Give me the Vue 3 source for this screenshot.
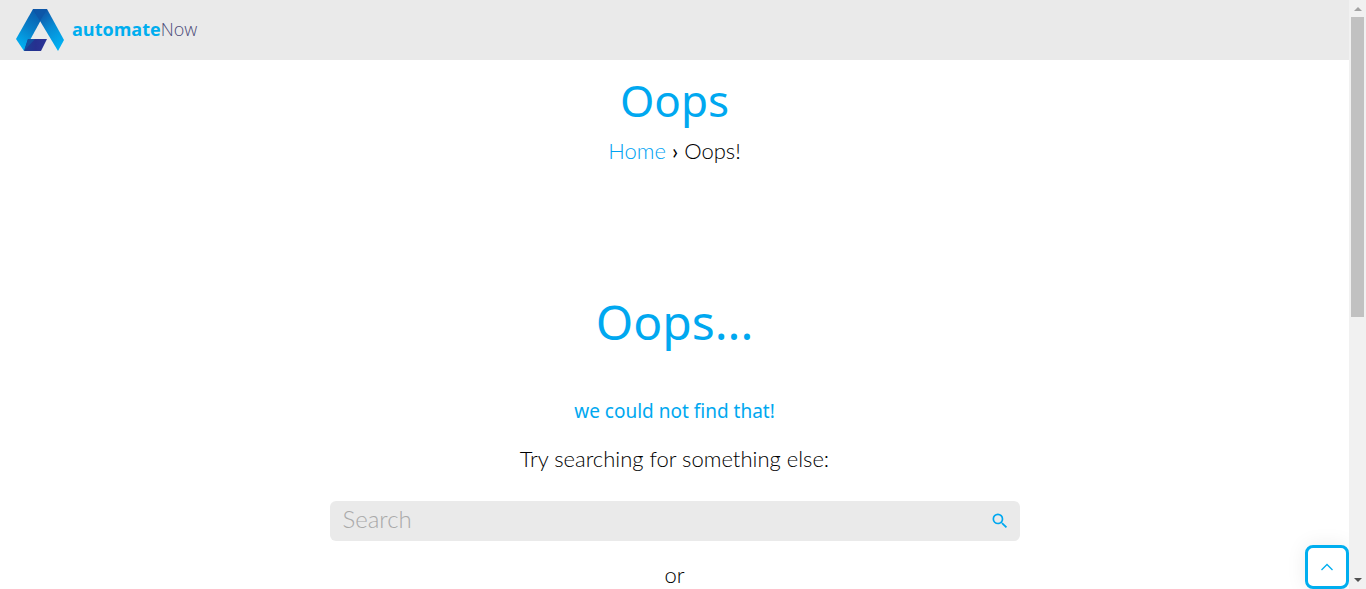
<script setup>
import { ref } from 'vue'

const query = ref('')
</script>

<template>
  <div class="window">
    <div class="page">
      <header class="site-header">
        <a class="brand" href="#" aria-label="automateNow">
          <svg class="brand-mark" viewBox="0 0 48 42" aria-hidden="true">
            <defs>
              <linearGradient id="left-limb" x1="0.75" y1="0" x2="0.25" y2="1">
                <stop offset="0" stop-color="#0a55a6" />
                <stop offset="0.5" stop-color="#087fc9" />
                <stop offset="1" stop-color="#00b4f5" />
              </linearGradient>
              <linearGradient id="right-limb" x1="0.2" y1="0" x2="0.8" y2="1">
                <stop offset="0" stop-color="#134a9c" />
                <stop offset="0.5" stop-color="#078bd4" />
                <stop offset="1" stop-color="#00b4f5" />
              </linearGradient>
              <linearGradient id="foot" x1="0" y1="0" x2="1" y2="0">
                <stop offset="0" stop-color="#1a3f94" />
                <stop offset="0.5" stop-color="#26308f" />
                <stop offset="1" stop-color="#2b3597" />
              </linearGradient>
            </defs>
            <path d="M17 0H31L8 42L0 30Z" fill="url(#left-limb)" />
            <path d="M17 0H31L48 31L42 42L24 12Z" fill="url(#right-limb)" />
            <path d="M17 0H31L24 12Z" fill="#0d57a8" />
            <path d="M12 30H31L25 42H8Z" fill="url(#foot)" />
            <path d="M12 30H19L8 42Z" fill="#14509f" />
          </svg>
          <span class="brand-name"><b>automate</b>Now</span>
        </a>
      </header>

      <main>
        <section class="title">
          <h1>Oops</h1>
          <nav class="crumbs" aria-label="Breadcrumb">
            <a href="#">Home</a> <b>›</b> <span>Oops!</span>
          </nav>
        </section>

        <section class="missing">
          <h2>Oops...</h2>
          <h3>we could not find that!</h3>
          <p>Try searching for something else:</p>
          <form class="search" role="search" @submit.prevent>
            <input v-model="query" type="text" placeholder="Search" aria-label="Search" />
            <button type="submit" aria-label="Submit search">
              <svg viewBox="0 0 24 24" aria-hidden="true">
                <path d="M15.5 14h-.79l-.28-.27A6.47 6.47 0 0 0 16 9.5 6.5 6.5 0 1 0 9.5 16c1.61 0 3.09-.59 4.23-1.57l.27.28v.79l5 4.99L20.49 19l-4.99-5zm-6 0C7.01 14 5 11.99 5 9.5S7.01 5 9.5 5 14 7.01 14 9.5 11.99 14 9.5 14z" />
              </svg>
            </button>
          </form>
          <p>or</p>
        </section>
      </main>

      <button class="to-top" type="button" aria-label="Back to top">
        <svg viewBox="0 0 14 8" aria-hidden="true"><path d="M1.5 7L7 1.5L12.5 7" /></svg>
      </button>
    </div>

    <div class="scrollbar" aria-hidden="true">
      <svg class="arrow up" viewBox="0 0 8 4"><path d="M0 4L4 0L8 4Z" /></svg>
      <div class="track"><div class="thumb"></div></div>
      <svg class="arrow" viewBox="0 0 8 4"><path d="M0 0H8L4 4Z" /></svg>
    </div>
  </div>
</template>

<style>
body {
  margin: 0;
  background: #fff;
}
</style>

<style scoped>
.window {
  display: flex;
  height: 100vh;
  overflow: hidden;
  font-family: Lato, "Open Sans", sans-serif;
  font-weight: 300;
  font-size: 22px;
  line-height: 32px;
  color: #000;
}
.page {
  position: relative;
  flex: 1;
  min-width: 0;
  overflow: hidden;
}
.site-header {
  display: flex;
  align-items: center;
  height: 60px;
  padding: 0 16px;
  background: #eaeaea;
}
.brand {
  display: flex;
  align-items: center;
  gap: 8px;
  color: #4b4b78;
  text-decoration: none;
}
.brand-mark {
  width: 48px;
  height: 42px;
}
.brand-name {
  font-family: "Open Sans", Lato, sans-serif;
  font-size: 18px;
  line-height: 24px;
  padding-bottom: 2px;
}
.brand-name b {
  font-weight: 700;
  color: #00aeef;
}
.title,
.missing {
  text-align: center;
}
.title {
  padding: 10px 16px 0;
}
h1,
h2,
h3 {
  margin: 0;
  font-family: "Noto Sans", "Open Sans", sans-serif;
  font-weight: 400;
  color: #00a8f0;
}
h1 {
  font-size: 44px;
  line-height: 60px;
}
.crumbs {
  margin-top: 5px;
}
.crumbs a {
  color: #00a2f2;
  text-decoration: none;
}
.missing {
  box-sizing: border-box;
  max-width: 690px;
  margin: 0 auto;
  padding-top: 123px;
}
h2 {
  font-size: 48px;
  line-height: 64px;
}
h3 {
  margin-top: 41px;
  font-size: 19px;
  line-height: 32px;
}
p {
  margin: 16px 0 26px;
}
.search {
  display: flex;
  align-items: center;
  height: 40px;
  border-radius: 6px;
  background: #eaeaea;
}
.search + p {
  margin-top: 18px;
}
.search input {
  flex: 1;
  min-width: 0;
  padding: 0 0 4px 13px;
  border: 0;
  outline: 0;
  background: transparent;
  font: inherit;
  font-size: 24px;
  color: #000;
}
.search input::placeholder {
  color: #a9a9a9;
  opacity: 1;
}
.search button {
  display: flex;
  align-items: center;
  justify-content: center;
  width: 40px;
  height: 40px;
  padding: 0;
  border: 0;
  background: transparent;
}
.search svg {
  width: 20px;
  height: 20px;
  fill: #00a8f0;
}
.to-top {
  position: absolute;
  right: 0;
  bottom: 0;
  display: flex;
  align-items: center;
  justify-content: center;
  width: 44px;
  height: 44px;
  padding: 0;
  border: 3px solid #00aeef;
  border-radius: 8px;
  background: #fff;
  box-shadow: 0 0 20px rgba(0, 0, 0, 0.08);
}
.to-top svg {
  width: 14px;
  height: 8px;
  fill: none;
  stroke: #00aeef;
  stroke-width: 1.3;
}
.scrollbar {
  display: flex;
  flex-direction: column;
  align-items: center;
  width: 17px;
  padding: 7px 0;
  box-sizing: border-box;
  background: #f1f1f1;
}
.arrow {
  width: 8px;
  height: 4px;
  fill: #505050;
}
.arrow.up {
  fill: #a3a3a3;
}
.track {
  flex: 1;
  width: 13px;
  padding: 6px 0;
}
.thumb {
  height: 54%;
  background: #c1c1c1;
}
</style>
